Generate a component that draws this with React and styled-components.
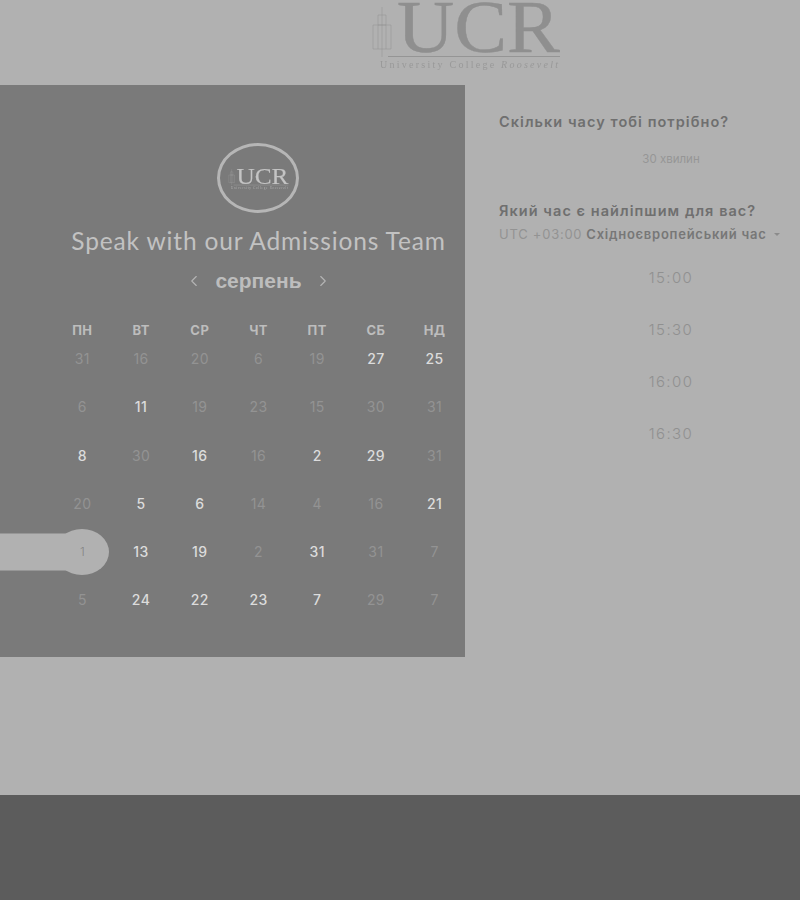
import React from 'react';
import styled, { createGlobalStyle } from 'styled-components';
import { ChevronLeft, ChevronRight } from 'lucide-react';

const GlobalStyle = createGlobalStyle`
  html, body {
    margin: 0;
    padding: 0;
    background: #b1b1b1;
  }
  body {
    font-family: "Inter", "Noto Sans", sans-serif;
    overflow: hidden;
  }
`;

const Page = styled.div`
  width: 800px;
  height: 900px;
  display: flex;
  flex-direction: column;
  overflow: hidden;
`;

const Header = styled.header`
  height: 85px;
  flex: none;
  display: flex;
  justify-content: center;
  padding-left: 129px;
  box-sizing: border-box;
`;

const LogoSvg = styled.svg`
  display: block;
  flex: none;
  color: ${(p) => p.$color};
  filter: blur(${(p) => p.$blur}px);
`;

const Logo = ({ width, height, color, blur }) => (
  <LogoSvg width={width} height={height} viewBox="0 0 193 72" $color={color} $blur={blur}>
    <path
      d="M14 7v8M10 15h8v10h-8zM5 25h18v24H5zM10 25v24M18 25v24M14 15v42"
      fill="none"
      stroke="currentColor"
      strokeWidth="1"
      opacity="0.45"
    />
    <text
      x="29"
      y="52"
      fontFamily="Liberation Serif, serif"
      fontSize="74"
      fill="currentColor"
      stroke="currentColor"
      strokeWidth="0.4"
      textLength="163"
      lengthAdjust="spacingAndGlyphs"
    >
      UCR
    </text>
    <path d="M20 56.5h172" stroke="currentColor" strokeWidth="1" opacity="0.8" />
    <text x="12" y="68" fontFamily="Liberation Serif, serif" fontSize="10" fill="currentColor" opacity="0.7" textLength="178">
      University College <tspan fontStyle="italic">Roosevelt</tspan>
    </text>
  </LogoSvg>
);

const Main = styled.main`
  display: flex;
  align-items: flex-start;
  flex: 1;
`;

const CalendarPanel = styled.section`
  width: 465px;
  height: 572px;
  flex: none;
  box-sizing: border-box;
  background: #7a7a7a;
  padding: 58px 1px 0 53px;
  display: flex;
  flex-direction: column;
  align-items: center;
  position: relative;
`;

const Badge = styled.div`
  width: 82px;
  height: 70px;
  flex: none;
  margin-right: 2px;
  box-sizing: border-box;
  border: 3px solid #b6b6b6;
  border-radius: 50%;
  display: flex;
  align-items: center;
  justify-content: center;
`;

const PanelTitle = styled.h1`
  margin: 14px 0 0;
  font-family: "Lato", "Open Sans", sans-serif;
  font-size: 24.5px;
  line-height: 28px;
  font-weight: 400;
  letter-spacing: 0.85px;
  color: #c2c2c2;
  white-space: nowrap;
`;

const MonthRow = styled.div`
  margin-top: 13px;
  height: 26px;
  display: flex;
  align-items: center;
  gap: 12px;
  color: #b4b4b4;
`;

const MonthName = styled.span`
  font-family: "Liberation Sans", sans-serif;
  font-size: 21px;
  font-weight: 700;
  color: #bdbdbd;
`;

const WeekGrid = styled.div`
  margin-top: 28px;
  width: 411px;
  display: grid;
  grid-template-columns: repeat(7, 1fr);
  justify-items: center;
`;

const WeekDay = styled.span`
  font-size: 13px;
  line-height: 16px;
  font-weight: 700;
  letter-spacing: 0.4px;
  color: #bdbdbd;
`;

const DayGrid = styled.div`
  margin-top: 13px;
  width: 411px;
  display: grid;
  grid-template-columns: repeat(7, 1fr);
  grid-auto-rows: 48.3px;
  justify-items: center;
  align-items: start;
`;

const Day = styled.span`
  font-size: 14px;
  line-height: 16px;
  letter-spacing: 0.4px;
  font-weight: ${(p) => (p.$active ? 500 : 400)};
  color: ${(p) => (p.$active ? '#dcdcdc' : '#939393')};
`;

const SelectedDay = styled.span`
  position: relative;
  z-index: 0;
  font-size: 12px;
  line-height: 16px;
  font-weight: 300;
  color: #858585;

  &::before {
    content: '';
    position: absolute;
    z-index: -1;
    left: 50%;
    top: 50%;
    width: 54px;
    height: 46px;
    border-radius: 50%;
    background: #b1b1b1;
    transform: translate(-50%, -50%);
  }

  &::after {
    content: '';
    position: absolute;
    z-index: -1;
    right: 50%;
    top: 50%;
    width: 82px;
    height: 37px;
    background: #b1b1b1;
    transform: translateY(-50%);
  }
`;

const Side = styled.section`
  flex: 1;
  padding: 28px 0 0 34px;
`;

const SideTitle = styled.h2`
  margin: 0;
  font-size: 14.5px;
  line-height: 18px;
  font-weight: 600;
  letter-spacing: 1.05px;
  color: #6f6f6f;
  white-space: nowrap;
`;

const Duration = styled.div`
  margin: 20px 0 35px;
  padding-left: 43px;
  text-align: center;
  font-size: 11.5px;
  line-height: 16px;
  color: #969696;
`;

const Zone = styled.div`
  margin-top: 6px;
  display: flex;
  align-items: center;
  gap: 4px;
  font-size: 13px;
  line-height: 16px;
  letter-spacing: 0.75px;
  white-space: nowrap;
  color: #777777;
`;

const ZoneOffset = styled.span`
  color: #939393;
`;

const ZoneName = styled.span`
  font-weight: 600;
`;

const Caret = styled.span`
  margin-left: 3px;
  width: 0;
  height: 0;
  border-left: 3px solid transparent;
  border-right: 3px solid transparent;
  border-top: 3px solid #8b8b8b;
`;

const Slots = styled.div`
  margin-top: 10px;
  padding-left: 43px;
  display: flex;
  flex-direction: column;
  align-items: center;
`;

const Slot = styled.div`
  height: 52px;
  line-height: 52px;
  font-size: 15px;
  font-weight: 300;
  letter-spacing: 1.4px;
  color: #909090;
`;

const Footer = styled.footer`
  height: 105px;
  flex: none;
  background: #5c5c5c;
`;

const weekDays = ['ПН', 'ВТ', 'СР', 'ЧТ', 'ПТ', 'СБ', 'НД'];

// a: clickable day, s: selected day, everything else is greyed out
const days = [
  [31], [16], [20], [6], [19], [27, 'a'], [25, 'a'],
  [6], [11, 'a'], [19], [23], [15], [30], [31],
  [8, 'a'], [30], [16, 'a'], [16], [2, 'a'], [29, 'a'], [31],
  [20], [5, 'a'], [6, 'a'], [14], [4], [16], [21, 'a'],
  [1, 's'], [13, 'a'], [19, 'a'], [2], [31, 'a'], [31], [7],
  [5], [24, 'a'], [22, 'a'], [23, 'a'], [7, 'a'], [29], [7],
];

const slots = ['15:00', '15:30', '16:00', '16:30'];

const App = () => {
  return (
    <Page>
      <GlobalStyle />
      <Header>
        <Logo width={193} height={72} color="#8f8f8f" blur={0.4} />
      </Header>
      <Main>
        <CalendarPanel>
          <Badge>
            <Logo width={62} height={23} color="#c4c4c4" blur={0.2} />
          </Badge>
          <PanelTitle>Speak with our Admissions Team</PanelTitle>
          <MonthRow>
            <ChevronLeft size={18} strokeWidth={1.5} />
            <MonthName>серпень</MonthName>
            <ChevronRight size={18} strokeWidth={1.5} />
          </MonthRow>
          <WeekGrid>
            {weekDays.map((d) => (
              <WeekDay key={d}>{d}</WeekDay>
            ))}
          </WeekGrid>
          <DayGrid>
            {days.map(([n, kind], index) =>
              kind === 's' ? (
                <SelectedDay key={index}>{n}</SelectedDay>
              ) : (
                <Day key={index} $active={kind === 'a'}>{n}</Day>
              )
            )}
          </DayGrid>
        </CalendarPanel>
        <Side>
          <SideTitle>Скільки часу тобі потрібно?</SideTitle>
          <Duration>30 хвилин</Duration>
          <SideTitle>Який час є найліпшим для вас?</SideTitle>
          <Zone>
            <ZoneOffset>UTC +03:00</ZoneOffset>
            <ZoneName>Східноєвропейський час</ZoneName>
            <Caret />
          </Zone>
          <Slots>
            {slots.map((s) => (
              <Slot key={s}>{s}</Slot>
            ))}
          </Slots>
        </Side>
      </Main>
      <Footer />
    </Page>
  );
};

export default App;
